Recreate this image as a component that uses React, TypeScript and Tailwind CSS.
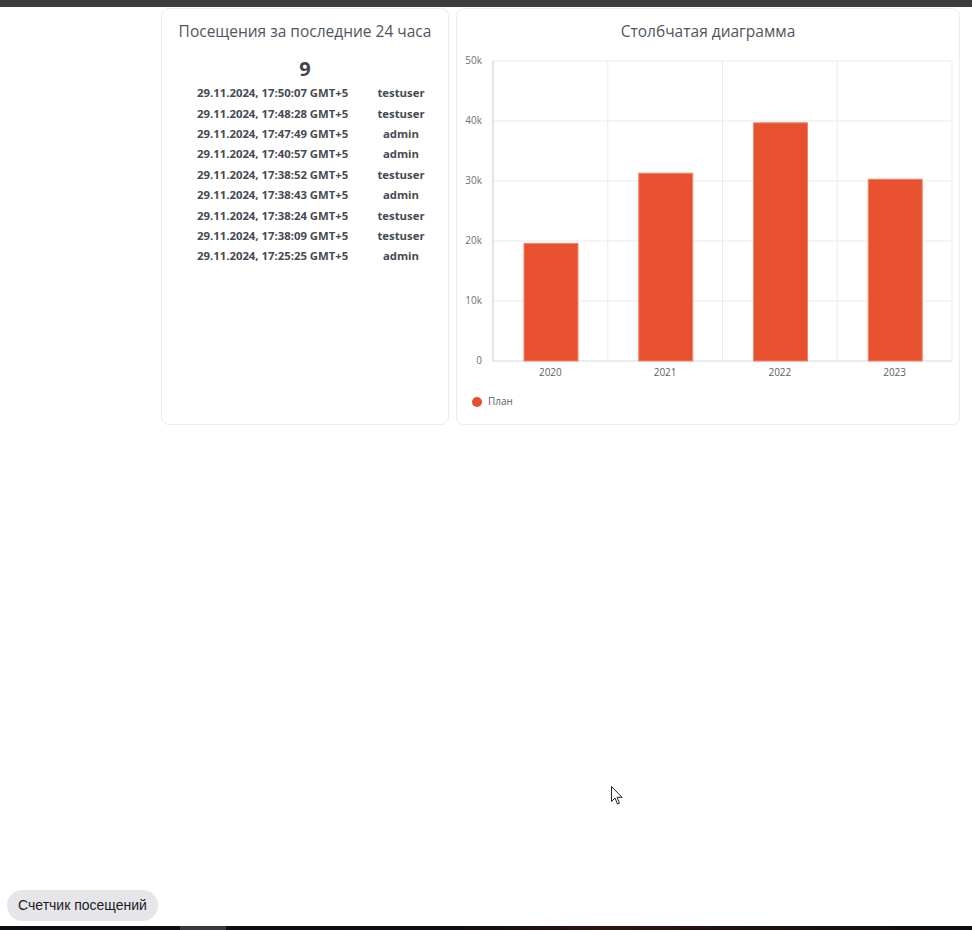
import React from 'react';

const visits = [
  { time: '29.11.2024, 17:50:07 GMT+5', user: 'testuser' },
  { time: '29.11.2024, 17:48:28 GMT+5', user: 'testuser' },
  { time: '29.11.2024, 17:47:49 GMT+5', user: 'admin' },
  { time: '29.11.2024, 17:40:57 GMT+5', user: 'admin' },
  { time: '29.11.2024, 17:38:52 GMT+5', user: 'testuser' },
  { time: '29.11.2024, 17:38:43 GMT+5', user: 'admin' },
  { time: '29.11.2024, 17:38:24 GMT+5', user: 'testuser' },
  { time: '29.11.2024, 17:38:09 GMT+5', user: 'testuser' },
  { time: '29.11.2024, 17:25:25 GMT+5', user: 'admin' },
];

const bars = [
  { year: '2020', value: 19.6 },
  { year: '2021', value: 31.3 },
  { year: '2022', value: 39.7 },
  { year: '2023', value: 30.3 },
];

const ticks = ['50k', '40k', '30k', '20k', '10k', '0'];

// plot geometry (svg coords)
const X0 = 36;
const X1 = 495;
const Y0 = 11;
const Y1 = 311;
const BAND = (X1 - X0) / 4;

const VisitsCard = () => (
  <div className="w-[288px] h-[417px] rounded-lg border border-[#ececef] bg-white font-['Open_Sans',sans-serif]">
    <h3 className="pt-[12px] text-center text-[15.5px] leading-5 text-[#505560]">Посещения за последние 24 часа</h3>
    <div className="mt-[16px] text-center text-[20px] font-bold leading-6 text-[#3f434c]">{visits.length}</div>
    <div className="mt-[1.6px] flex flex-col">
      {visits.map((v, i) => (
        <div key={i} className="flex h-[20.4px] items-center pl-[35px] text-[11.35px] font-bold text-[#474a52]">
          <span className="w-[152px] whitespace-nowrap">{v.time}</span>
          <span className="ml-[16px] w-[72px] text-center">{v.user}</span>
        </div>
      ))}
    </div>
  </div>
);

const BarChart = () => (
  <svg width="502" height="370" className="block font-['Open_Sans',sans-serif]">
    {ticks.map((t, i) => {
      const y = Y0 + i * 60;
      return (
        <g key={t}>
          <line x1={X0} x2={X1} y1={y} y2={y} stroke={i === 5 ? '#d3d6e0' : '#ebebef'} strokeWidth="1" />
          <text x="25" y={y} textAnchor="end" dominantBaseline="middle" fontSize="10" fill="#6e6e72">{t}</text>
        </g>
      );
    })}
    {[1, 2, 3, 4].map((i) => (
      <line key={i} x1={X0 + i * BAND} x2={X0 + i * BAND} y1={Y0} y2={Y1} stroke="#ebebef" strokeWidth="1" />
    ))}
    <line x1={X0} x2={X0} y1={Y0} y2={Y1} stroke="#d8dbe5" strokeWidth="1.5" />
    {bars.map((b, i) => {
      const top = Y1 - b.value * 6;
      return (
        <g key={b.year}>
          <rect x={X0 + i * BAND + 31} y={top} width="54" height={Y1 - top} fill="#e8512f" stroke="#f2866b" strokeWidth="1" />
          <text x={X0 + i * BAND + BAND / 2} y="323" textAnchor="middle" dominantBaseline="middle" fontSize="10" fill="#5b5e66">{b.year}</text>
        </g>
      );
    })}
    <circle cx="20" cy="352" r="5" fill="#e8512f" />
    <text x="31" y="352" dominantBaseline="middle" fontSize="10" fill="#5b5e66">План</text>
  </svg>
);

const ChartCard = () => (
  <div className="w-[504px] h-[417px] rounded-lg border border-[#ececef] bg-white font-['Open_Sans',sans-serif]">
    <h3 className="pt-[12px] text-center text-[15.5px] leading-5 text-[#505560]">Столбчатая диаграмма</h3>
    <div className="mt-[9px]">
      <BarChart />
    </div>
  </div>
);

export default function App() {
  return (
    <div className="relative flex h-[930px] flex-col overflow-hidden bg-white">
      <div className="h-[7px] bg-[#3b3b3b]" />
      <main className="flex flex-1 gap-[7px] pl-[161px] pt-px">
        <VisitsCard />
        <ChartCard />
      </main>
      <footer className="px-[7px] pb-[5px]">
        <button className="h-[31px] w-[151px] rounded-full bg-[#e6e6ea] text-[14px] text-[#1c1c1c] font-['Liberation_Sans',Arial,sans-serif]">
          Счетчик посещений
        </button>
      </footer>
      <div className="flex h-[4px] bg-[linear-gradient(90deg,#0b0c10_0%,#0d0d12_45%,#2a1510_62%,#1c1210_80%,#0c0c10_100%)]">
        <div className="ml-[180px] w-[46px] bg-[#3a3a3c]" />
      </div>
      <svg className="absolute left-[611px] top-[786px]" width="12" height="19" viewBox="0 0 12 19">
        <path d="M0.5 0.5 L0.5 15.5 L4 12 L6.5 18 L8.5 17.2 L6 11.3 L11 11.3 Z" fill="#fff" stroke="#222" strokeWidth="1" strokeLinejoin="round" />
      </svg>
    </div>
  );
}
